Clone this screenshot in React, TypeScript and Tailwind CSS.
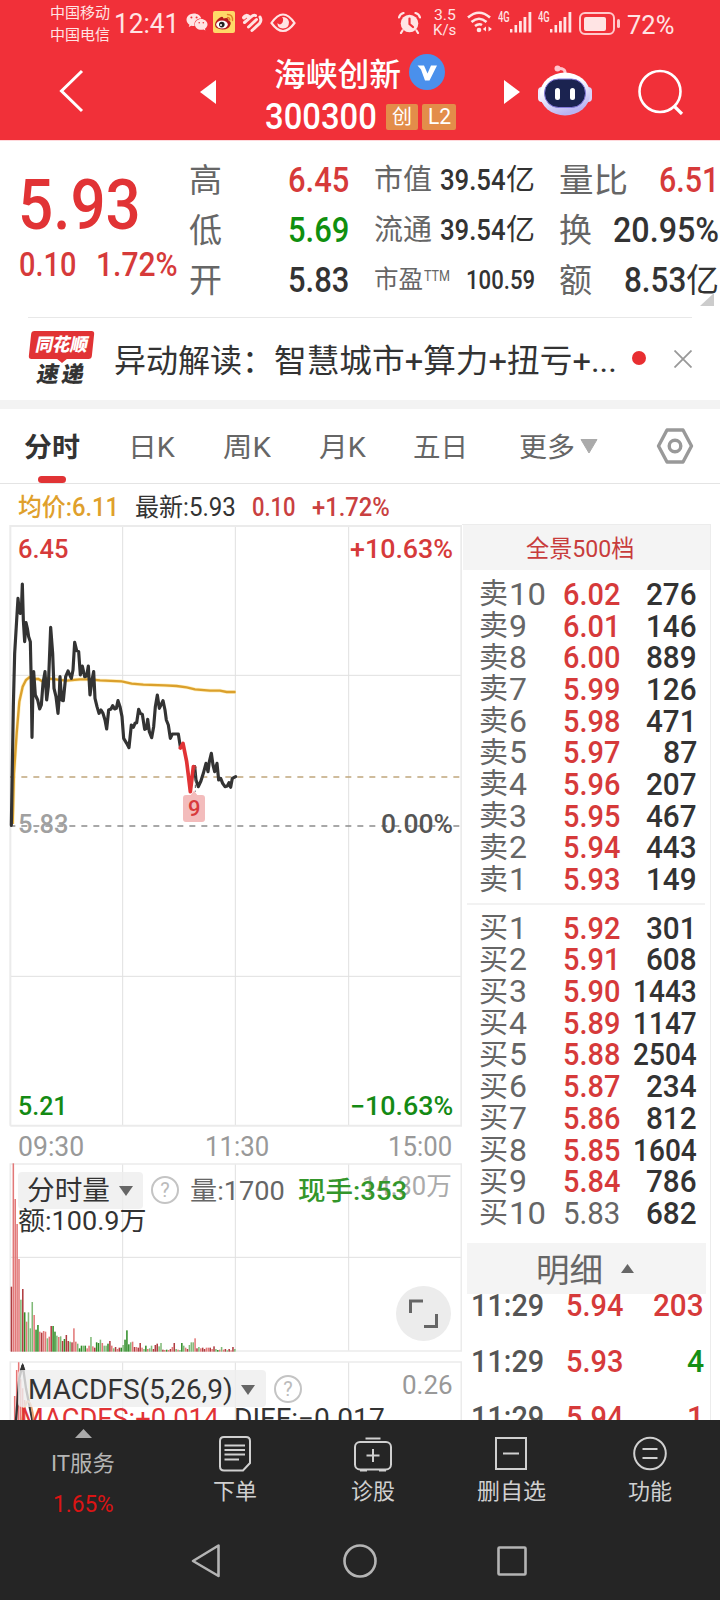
import React, { useLayoutEffect, useRef, useState } from 'react';
import { FaWeixin } from 'react-icons/fa';

const RED = '#d63a3a';

interface FitTextProps {
  className: string; // must carry the target width
  children: React.ReactNode;
}

// Condenses or stretches one line of text to the width of its box
const FitText: React.FC<FitTextProps> = ({ className, children }) => {
  const outer = useRef<HTMLSpanElement>(null);
  const inner = useRef<HTMLSpanElement>(null);
  const [scale, setScale] = useState(1);

  useLayoutEffect(() => {
    if (outer.current && inner.current) {
      setScale(outer.current.offsetWidth / inner.current.offsetWidth);
    }
  }, [children]);

  return (
    <span ref={outer} className={`flex shrink-0 leading-none ${className}`}>
      <span
        ref={inner}
        className="shrink-0 origin-left whitespace-pre"
        style={{ transform: `scaleX(${scale})` }}
      >
        {children}
      </span>
    </span>
  );
};

const SignalBars = () => (
  <div className="flex items-start">
    <FitText className="w-[12px] -mt-px text-[14px] font-medium">4G</FitText>
    <svg className="w-[22px] h-[22px]" viewBox="0 0 22 22" fill="currentColor">
      <rect x="0" y="18" width="2.4" height="3.500" />
      <rect x="4.5" y="14" width="2.6" height="7.500" />
      <rect x="9" y="10" width="2.8" height="11.500" />
      <rect x="13.500" y="6" width="2.800" height="15.500" />
      <rect x="18.500" y="1" width="2.800" height="20.500" />
    </svg>
  </div>
);

const StatusBar = () => (
  <div className="flex h-[46px] text-[#ffe4e4]">
    <div className="ml-[50px] w-[60px] pt-[2px] text-[15px] leading-[22px] whitespace-nowrap">
      <div>中国移动</div>
      <div>中国电信</div>
    </div>
    <div className="ml-[4px] pt-[11px]">
      <FitText className="w-[65px] text-[27px]">12:41</FitText>
    </div>
    <FaWeixin className="ml-[7px] mt-[11px] w-[22px] h-[22px]" />
    <svg className="ml-[5px] mt-[11px] w-[22px] h-[22px]" viewBox="0 0 22 22">
      <rect width="22" height="22" rx="2" fill="#ffd968" />
      <path d="M7 6.500 Q10 4.500 10.500 7.500 Q16 6 15.500 9.500 Q18.500 10.500 17.500 13.500 Q16 18.500 9.500 18.500 Q2 18 2 13.500 Q2.500 9.500 7 6.500 Z" fill="#b5191c" />
      <ellipse cx="9" cy="13.500" rx="5.800" ry="4" fill="#fff" />
      <circle cx="8.800" cy="13.600" r="2.800" fill="#222" />
      <circle cx="8" cy="14" r="1" fill="#fff" />
      <path d="M14.500 3.500 Q20 3.500 19.500 9.500 M14.500 6.500 Q17 6.500 16.800 9" fill="none" stroke="#e2812a" strokeWidth="1.400" strokeLinecap="round" />
    </svg>
    <svg className="ml-[6px] mt-[13px] w-[22px] h-[20px]" viewBox="0 0 22 20" fill="none" stroke="currentColor" strokeLinecap="round">
      <path d="M3 4.500 Q5 1.500 8 4" strokeWidth="4" />
      <path d="M3.500 9.500 L10 4 Q12.500 1.500 14.500 2.500" strokeWidth="3" />
      <path d="M7.500 14 L15.500 6.500" strokeWidth="3" />
      <path d="M11 17.500 L18.500 10.500 Q21 7.500 19 4" strokeWidth="3" />
    </svg>
    <svg className="ml-[7px] mt-[13px] w-[26px] h-[20px]" viewBox="0 0 26 20" fill="none" stroke="currentColor" strokeWidth="2.2">
      <path d="M1.500 10 Q13 -7 24.500 10 Q13 26 1.500 10 Z" />
      <path d="M12 4 Q18 4 19 9 Q19 15.500 13 15.500 Q7 15 7.500 10 Q10 13 12.500 9.500 Q14 6 12 4 Z" fill="currentColor" stroke="none" />
    </svg>
    <svg className="ml-[102px] mt-[12px] w-[23px] h-[22px]" viewBox="0 0 23 22" fill="currentColor">
      <circle cx="11.500" cy="11.500" r="8.800" />
      <path d="M1 5.500 Q2 2 5.500 1 M22 5.500 Q21 2 17.500 1 M4.500 18.500 L3 21 M18.500 18.500 L20 21" fill="none" stroke="currentColor" strokeWidth="2.200" strokeLinecap="round" />
      <path d="M11.500 6.500 V12 L15 15" fill="none" stroke="#f13038" strokeWidth="2.200" strokeLinecap="round" />
    </svg>
    <div className="ml-[12px] pt-[8px] text-[15px]">
      <FitText className="w-[22px] ml-px">3.5</FitText>
      <FitText className="w-[23px] text-[15px]">K/s</FitText>
    </div>
    <svg className="ml-[11px] mt-[11px] w-[26px] h-[22px]" viewBox="0 0 26 22" fill="none" stroke="currentColor" strokeWidth="2.600">
      <path d="M1 6.500 Q12 -3 23 6.500" />
      <path d="M4.500 11 Q12 4.500 19.500 11" />
      <path d="M8 15 Q12 12 15 14" />
      <circle cx="12" cy="19" r="2.300" fill="currentColor" stroke="none" />
      <path d="M19 15.500 V20.500 L15.800 18 Z M21.500 15.500 V20.500 L25 18 Z" fill="currentColor" stroke="none" />
    </svg>
    <div className="ml-[5px] mt-[11px]"><SignalBars /></div>
    <div className="ml-[6px] mt-[11px]"><SignalBars /></div>
    <div className="ml-[7px] mt-[12px] w-[36px] h-[23px] border-2 border-[#ffc9cb] rounded-[6px] p-[2.5px]">
      <div className="w-[22px] h-full bg-[#ffe4e4] rounded-[2px]" />
    </div>
    <div className="ml-[1.500px] mt-[19px] w-[3px] h-[9px] rounded-full bg-[#ffc9cb]" />
    <div className="ml-[7px] pt-[13px]">
      <FitText className="w-[47px] text-[25px]">72%</FitText>
    </div>
  </div>
);

const Robot = () => (
  <svg className="w-[54px] h-[52px]" viewBox="0 0 54 52">
    <defs>
      <linearGradient id="shell" x1="0" y1="0" x2="0.400" y2="1">
        <stop offset="0.400" stopColor="#fff" />
        <stop offset="1" stopColor="#b9b4f2" />
      </linearGradient>
    </defs>
    <path d="M20 3.500 Q28 3 27 9" fill="none" stroke="#ffc5cd" strokeWidth="3" />
    <circle cx="19.500" cy="3.500" r="3" fill="#ffc5cd" />
    <rect x="0" y="22" width="8" height="15" rx="4" fill="#efe9ff" />
    <rect x="46" y="22" width="8" height="15" rx="4" fill="#d8d2fa" />
    <ellipse cx="27" cy="29" rx="25" ry="21.500" fill="url(#shell)" />
    <rect x="6.500" y="14" width="41" height="28.500" rx="14" fill="#1b2350" stroke="#8579dc" strokeWidth="1" />
    <rect x="17" y="23" width="5" height="12" rx="2.500" fill="#fff" />
    <rect x="32" y="23" width="5" height="12" rx="2.500" fill="#fff" />
  </svg>
);

const Header = () => (
  <div className="flex h-[94px] text-white">
    <svg className="ml-[58px] mt-[23px] w-[26px] h-[44px]" viewBox="0 0 26 44" fill="none" stroke="currentColor" strokeWidth="3">
      <path d="M24 2 L3.500 22 L24 42" />
    </svg>
    <svg className="ml-[116px] mt-[34px] w-[16px] h-[24px]" viewBox="0 0 16 24" fill="currentColor">
      <path d="M16 0 V24 L0 12 Z" />
    </svg>
    <div className="ml-[49px] w-[192px]">
      <div className="flex items-center h-[52px] pl-[9px]">
        <FitText className="w-[127px] mt-[5px] text-[32px] font-medium">海峡创新</FitText>
        <svg className="ml-[8px] w-[36px] h-[36px]" viewBox="0 0 36 36">
          <circle cx="18" cy="18" r="18" fill="#4a90ec" />
          <path d="M8.500 11.500 H15 L18.500 19.500 L22 11.500 H28 L20.500 26.500 H16 L12 15.500 Z" fill="#fff" />
        </svg>
      </div>
      <div className="flex items-center pt-[1px]">
        <FitText className="w-[112px] text-[36px] font-medium">300300</FitText>
        <div className="ml-[9px] w-[32px] h-[26px] rounded-[2px] bg-[#e38d4a] flex items-center justify-center text-[20px] leading-none">创</div>
        <div className="ml-[4px] w-[34px] h-[26px] rounded-[2px] bg-[#e38d4a] flex items-center justify-center text-[22px] leading-none">
          <FitText className="w-[23px]">L2</FitText>
        </div>
      </div>
    </div>
    <svg className="ml-[47px] mt-[34px] w-[16px] h-[24px]" viewBox="0 0 16 24" fill="currentColor">
      <path d="M0 0 V24 L16 12 Z" />
    </svg>
    <div className="ml-[18px] mt-[19px]"><Robot /></div>
    <svg className="ml-[46px] mt-[23px] w-[46px] h-[46px]" viewBox="0 0 46 46" fill="none" stroke="currentColor" strokeWidth="2.600">
      <circle cx="22" cy="22.500" r="20.500" />
      <path d="M36 37 L44 45" strokeWidth="3.200" />
    </svg>
  </div>
);

const Quote = () => (
  <div className="relative flex h-[176px] text-[#333]">
    <div className="w-[189px] pl-[20px] text-[#e13335]">
      <FitText className="-ml-[2px] w-[123px] mt-[28px] text-[71px] font-medium">5.93</FitText>
      <div className="flex mt-[8px] text-[33px] text-[#d63a3a] font-medium">
        <FitText className="w-[57px] -ml-[1px]">0.10</FitText>
        <FitText className="ml-[20px] w-[82px]">1.72%</FitText>
      </div>
    </div>
    <div className="w-[160px] pt-[14px] text-[35px] font-medium">
      {[['高', '6.45', 'text-[#d63a3a]'], ['低', '5.69', 'text-[#0f8f0f]'], ['开', '5.83', '']].map(([label, value, color]) => (
        <div key={label} className="flex items-center justify-between h-[50px]">
          <span className="text-[33px] leading-none font-normal text-[#666]">{label}</span>
          <FitText className={`w-[61px] ${color}`}>{value}</FitText>
        </div>
      ))}
    </div>
    <div className="ml-[25px] w-[161px] pt-[14px]">
      {['市值', '流通'].map((label) => (
        <div key={label} className="flex items-center h-[50px]">
          <FitText className="w-[58px] text-[29px] text-[#666]">{label}</FitText>
          <FitText className="ml-[8px] w-[66px] text-[30px] font-medium">39.54</FitText>
          <span className="text-[29px] leading-none">亿</span>
        </div>
      ))}
      <div className="flex items-center h-[50px] text-[#666]">
        <span className="text-[24.500px] leading-none">市盈</span>
        <FitText className="ml-[1px] mt-[-9px] w-[26px] text-[14px]">TTM</FitText>
        <FitText className="ml-[16px] w-[69px] text-[26px] font-medium text-[#333]">100.59</FitText>
      </div>
    </div>
    <div className="ml-[24px] w-[160px] pt-[14px] text-[35px] font-medium">
      <div className="flex items-center justify-between h-[50px]">
        <FitText className="w-[69px] text-[33px] font-normal text-[#666]">量比</FitText>
        <FitText className="w-[60px] text-[#d63a3a]">6.51</FitText>
      </div>
      <div className="flex items-center justify-between h-[50px]">
        <span className="text-[33px] leading-none font-normal text-[#666]">换</span>
        <FitText className="w-[106px]">20.95%</FitText>
      </div>
      <div className="flex items-center h-[50px]">
        <span className="mr-auto text-[33px] leading-none font-normal text-[#666]">额</span>
        <FitText className="w-[62px]">8.53</FitText>
        <span className="text-[33px] leading-none font-normal">亿</span>
      </div>
    </div>
    <svg className="absolute right-[6px] top-[152px] w-[14px] h-[13px]" viewBox="0 0 14 13">
      <path d="M14 0 V13 H0 Z" fill="#ccc" />
    </svg>
  </div>
);

const NewsBar = () => (
  <div className="mx-[28px] flex h-[83px] border-t border-[#e8e8e8] text-[#333]">
    <div className="mt-[13px] w-[68px]">
      <div className="w-[63px] h-[28px] ml-[2px] -skew-x-6 rounded-[3px] bg-[#e13335] flex justify-center items-center text-white">
        <FitText className="w-[52px] text-[18px] font-black -skew-x-6">同花顺</FitText>
      </div>
      <svg className="ml-[28px] -mt-px w-[12px] h-[5px]" viewBox="0 0 12 5"><path d="M0 0 H12 L6 5 Z" fill="#e13335" /></svg>
      <div className="ml-[9px] flex gap-[3px] text-[22px] font-black leading-[24px] -skew-x-10">
        <span>速</span>
        <span>递</span>
      </div>
    </div>
    <div className="flex items-center ml-[18px] h-[85px] text-[32px]">
      <FitText className="w-[160px]">异动解读：</FitText>
      <FitText className="w-[343px]">智慧城市+算力+扭亏+...</FitText>
    </div>
    <div className="ml-[15px] mt-[33px] w-[14px] h-[14px] rounded-full bg-[#e82e31]" />
    <svg className="ml-[28px] mt-[32px] w-[18px] h-[18px]" viewBox="0 0 18 18" stroke="#999" strokeWidth="1.800">
      <path d="M0.500 0.500 L17.500 17.500 M17.500 0.500 L0.500 17.500" />
    </svg>
  </div>
);

const Tabs = () => (
  <div className="relative flex h-[75px] pt-[26px] border-b border-[#e4e4e4] text-[27px] text-[#666]">
    <FitText className="ml-[24px] w-[56px] font-bold text-[#333]">分时</FitText>
    <FitText className="ml-[48px] w-[47px]">日K</FitText>
    <FitText className="ml-[48px] w-[48px]">周K</FitText>
    <FitText className="ml-[48px] w-[47px]">月K</FitText>
    <FitText className="ml-[47px] w-[55px]">五日</FitText>
    <FitText className="ml-[51px] w-[56px]">更多</FitText>
    <svg className="ml-[5px] mt-[4px] w-[18px] h-[15px]" viewBox="0 0 18 15">
      <path d="M1 0.500 H17 L9 14 Z" fill="#aaa" stroke="#aaa" strokeLinejoin="round" />
    </svg>
    <svg className="ml-[58px] -mt-[7px] w-[38px] h-[36px]" viewBox="0 0 38 36" fill="none" stroke="#999" strokeWidth="3.400" strokeLinejoin="round">
      <path d="M11 2 H27 L35.500 18 L27 34 H11 L2.500 18 Z" />
      <circle cx="19" cy="18" r="5.800" />
    </svg>
    <div className="absolute left-[38px] top-[67px] w-[28px] h-[7px] rounded-full bg-[#e13335]" />
  </div>
);

const PRICE_LINE =
  '34,916 36,800 40,560 44,400 50,300 54,235 58,275 61,280 64,275 67,192 70,300 74,365 78,308 82,325 86,350 91,365 94,500 96,652 99,500 101,455 106,525 113,540 119,567 124,555 129,490 135,455 140,540 145,500 152,322 158,400 162,505 168,530 174,580 177,540 180,470 185,540 190,542 197,470 204,453 214,475 219,450 224,367 230,392 236,395 241,465 247,438 254,470 260,468 265,438 270,525 276,480 281,455 285,535 291,560 297,580 303,570 309,580 315,600 320,627 326,570 333,567 338,557 344,567 349,565 354,542 360,560 366,590 371,655 380,670 387,683 394,615 400,622 405,610 410,608 416,568 421,580 427,583 434,628 440,625 443,598 448,635 455,653 461,620 466,560 472,525 478,565 483,555 489,542 495,570 499,600 505,615 511,655 517,642 535,642 541,680';
const PRICE_DROP = '541,684 549,670 555,700 560,725 565,765 571,815 576,775 580,740 584,742';
const PRICE_TAIL =
  '584,740 588,780 595,800 602,785 610,760 618,730 624,755 628,725 634,700 639,735 644,755 651,730 656,780 662,775 668,790 675,800 682,798 687,788 692,802 697,775 707,770';
const AVG_LINE =
  '38,912 42,760 50,640 58,545 68,500 78,480 88,472 100,477 115,477 125,483 140,475 200,482 240,478 270,478 300,481 365,484 395,491 430,494 495,496 530,498 560,502 585,508 630,512 660,512 680,516 707,516';

const PriceChart = () => (
  <div className="relative h-[606px] text-[25px]">
    <svg className="w-[462px] h-[606px]" viewBox="0 12 1386 1818" fill="none">
      <g stroke="#e0e0e0" strokeWidth="3">
        <path d="M368 18 V1816 M706 18 V1816 M1046 18 V1816 M30 466 H1386 M30 1369 H1386" />
      </g>
      <path d="M31 1817 V18 H1386 M1384 18 V1817 H31" stroke="#ebebeb" strokeWidth="6" />
      <path d="M30 771 H1386" stroke="#c0a67c" strokeWidth="5" strokeDasharray="18 18" strokeDashoffset="2" />
      <path d="M30 918 H1386" stroke="#8c8c8c" strokeWidth="4.500" strokeDasharray="18 18" strokeDashoffset="2" />
      <polyline points={AVG_LINE} stroke="#fff0c0" strokeWidth="11" />
      <polyline points={AVG_LINE} stroke="#dba02c" strokeWidth="7" />
      <g strokeWidth="9.500" strokeLinejoin="round" strokeLinecap="round">
        <polyline points={PRICE_LINE} stroke="#333" />
        <polyline points={PRICE_TAIL} stroke="#333" />
        <polyline points={PRICE_DROP} stroke="#e13335" strokeWidth="11" />
      </g>
      <path d="M586 740 V815" stroke="#555" strokeWidth="3" strokeDasharray="10 8" />
      <path d="M558 825 H572 L582 812 L592 825 H606 Q615 825 615 834 V897 Q615 906 606 906 H558 Q549 906 549 897 V834 Q549 825 558 825 Z" fill="#f3bcbc" />
    </svg>
    <div className="absolute left-[18px] top-[13px] font-medium text-[#d63a3a]"><FitText className="w-[51px]">6.45</FitText></div>
    <div className="absolute right-[9px] top-[13px] font-medium text-[#d63a3a]"><FitText className="w-[103px]">+10.63%</FitText></div>
    <div className="absolute left-[18px] top-[288px] font-medium text-[#a0a0a0]"><FitText className="w-[51px]">5.83</FitText></div>
    <div className="absolute right-[9px] top-[288px] font-medium text-[#555]"><FitText className="w-[72px]">0.00%</FitText></div>
    <div className="absolute left-[188px] top-[274px] text-[22px] font-medium text-[#d8393b]"><FitText className="w-[13px]">9</FitText></div>
    <div className="absolute left-[18px] top-[570px] font-medium text-[#148a14]"><FitText className="w-[50px]">5.21</FitText></div>
    <div className="absolute right-[9px] top-[570px] font-medium text-[#148a14]"><FitText className="w-[103px]">−10.63%</FitText></div>
  </div>
);

// [height, tone] for each minute; tones: r/R light and dark red, g/G light and dark green
const VOLUME =
  '195R 565r 458r 383r 278r 156g 188R 118G 90r 118g 70g 149g 110r 66G 80G 60r 57R 62r 60r 40g 45r 77R 77G 60G 48g 44r 46g 32R 38G 50R 32R 30g 28R 70r 30r 24g 10G 18G 18g 18G 10r 18r 44g 16r 12R 28G 26G 36g 26r 18g 18g 24G 32R 18r 10g 14R 8r 12R 12G 20g 36G 64G 22G 28g 30r 14R 14r 12R 26R 12r 8g 18G 8r 10g 18g 8R 20R 24R 16g 26g 6R 5r 6G 5r 8R 14r 26R 8g 6r 5g 26G 18g 12r 8R 20g 28g 28g 40r 10R 14g 10r 12R 8R 12r 12r 12R 8r 16R 8g 5G 6r 14g 6r 8R 4g 8R 4r 14R 8g'
    .split(' ')
    .map((v) => ({ height: parseInt(v, 10), tone: v.slice(-1) }));

const TONES: Record<string, string> = { r: '#e27878', R: '#b03c40', g: '#80ba78', G: '#2f8d27' };

const HelpIcon = () => (
  <span className="flex items-center justify-center w-[28px] h-[28px] rounded-full border-2 border-[#c4c4c4] text-[20px] leading-none text-[#bbb]">?</span>
);

const VolumeChart = () => (
  <div className="relative h-[192px]">
    <svg className="w-[462px] h-[192px]" viewBox="0 186 1386 576" fill="none">
      <path d="M368 192 V753 M706 192 V753 M1046 192 V753 M30 472 H1386" stroke="#e0e0e0" strokeWidth="3" />
      <path d="M31 753 V192 H1386 M1384 192 V753 H31" stroke="#ebebeb" strokeWidth="5" />
      {VOLUME.map((bar, i) => (
        <rect key={i} x={32 + i * 5.68} y={755 - bar.height} width="4.600" height={bar.height} fill={TONES[bar.tone]} />
      ))}
    </svg>
    <div className="absolute left-[18px] top-[10px] flex items-center h-[36px]">
      <div className="flex items-center w-[125px] h-[37px] pl-[9px] pt-[2px] rounded-[4px] bg-[#eee]/80 text-[27px] text-[#333]">
        <FitText className="w-[83px]">分时量</FitText>
        <svg className="ml-[9px] w-[14px] h-[10px]" viewBox="0 0 14 10"><path d="M0 0 H14 L7 10 Z" fill="#666" /></svg>
      </div>
      <div className="ml-[8px]"><HelpIcon /></div>
      <FitText className="ml-[11px] mt-[1px] w-[95px] text-[26px] text-[#666]">量:1700</FitText>
    </div>
    <div className="absolute right-[10px] top-[12px] text-[25px] text-[#aaa]"><FitText className="w-[90px]">14.30万</FitText></div>
    <div className="absolute left-[298px] top-[16px] text-[26px] font-medium text-[#33962a]"><FitText className="w-[109px]">现手:353</FitText></div>
    <div className="absolute left-[18px] top-[46px] text-[26px] text-[#333]"><FitText className="w-[129px]">额:100.9万</FitText></div>
    <svg className="absolute left-[396px] top-[124px] w-[55px] h-[55px]" viewBox="0 0 55 55">
      <circle cx="27.500" cy="27.500" r="27.500" fill="#ececec" />
      <path d="M14.500 27 V15 H27 M28 40.500 H40.500 V28" fill="none" stroke="#666" strokeWidth="3" />
    </svg>
  </div>
);

const MacdChart = () => (
  <div className="relative h-[66px] overflow-hidden">
    <svg className="w-[462px] h-[66px]" viewBox="0 762 1386 198" fill="none">
      <path d="M368 786 V960 M706 786 V960 M1046 786 V960" stroke="#e0e0e0" strokeWidth="3" />
      <path d="M31 960 V786 H1386 M1384 786 V960" stroke="#ebebeb" strokeWidth="5" />
      <path d="M44 960 V888 M50 960 V810 M56 960 V787 M62 960 V838 M68 960 V865 M74 960 V900" stroke="#e87575" strokeWidth="4.500" />
      <path d="M48 960 L58 835 L68 795 L78 865 L97 960" stroke="#333" strokeWidth="7" />
      <path d="M68 788 L60 810 H76 Z" fill="#333" />
      <path d="M66 960 Q78 895 86 905 Q94 905 101 960" stroke="#e8a06c" strokeWidth="6" />
    </svg>
    <div className="absolute left-[18px] top-[16px] flex items-center h-[37px]">
      <div className="flex items-center w-[248px] h-[37px] pl-[10px] pt-[2px] rounded-[4px] bg-[#eee]/80 text-[28px] text-[#333]">
        <FitText className="w-[205px]">MACDFS(5,26,9)</FitText>
        <svg className="ml-[8px] w-[14px] h-[10px]" viewBox="0 0 14 10"><path d="M0 0 H14 L7 10 Z" fill="#666" /></svg>
      </div>
      <div className="ml-[8px]"><HelpIcon /></div>
    </div>
    <div className="absolute right-[9px] top-[18px] text-[26px] text-[#999]"><FitText className="w-[51px]">0.26</FitText></div>
    <div className="absolute left-[20px] top-[52px] flex text-[27px]">
      <FitText className="w-[199px] text-[#e13335]">MACDFS:+0.014</FitText>
      <FitText className="ml-[15px] w-[151px] text-[#333]">DIFF:−0.017</FitText>
    </div>
  </div>
);

const SELLS: [string, string][] = [
  ['6.02', '276'], ['6.01', '146'], ['6.00', '889'], ['5.99', '126'], ['5.98', '471'],
  ['5.97', '87'], ['5.96', '207'], ['5.95', '467'], ['5.94', '443'], ['5.93', '149'],
];
const BUYS: [string, string][] = [
  ['5.92', '301'], ['5.91', '608'], ['5.90', '1443'], ['5.89', '1147'], ['5.88', '2504'],
  ['5.87', '234'], ['5.86', '812'], ['5.85', '1604'], ['5.84', '786'], ['5.83', '682'],
];
const QTY_WIDTH: Record<number, string> = { 1: 'w-[17px]', 2: 'w-[34px]', 3: 'w-[51px]', 4: 'w-[64px]' };

interface BookRowProps {
  side: string;
  level: number;
  price: string;
  qty: string;
}

const BookRow: React.FC<BookRowProps> = ({ side, level, price, qty }) => (
  <div className="flex items-center h-[31.700px] pl-[17px] pr-[13px] text-[32px]">
    <span className="text-[29px] leading-none mt-[2px] text-[#666]">{side}</span>
    <FitText className={`ml-[1px] text-[#666] ${level > 9 ? 'w-[37px]' : 'w-[18px]'}`}>{level}</FitText>
    <FitText className={`w-[57px] ${level > 9 ? 'ml-[17px]' : 'ml-[36px]'} ${price === '5.83' ? 'text-[#666]' : 'font-medium text-[#d63a3a]'}`}>{price}</FitText>
    <div className="ml-auto font-medium text-[#333]">
      <FitText className={QTY_WIDTH[qty.length]}>{qty}</FitText>
    </div>
  </div>
);

const OrderBook = () => (
  <div className="w-[249px] border-r border-t border-[#ececec] overflow-hidden">
    <div className="ml-px flex justify-center items-center h-[45px] pr-[13px] pt-[2px] bg-[#f4f4f4] text-[24px] text-[#c83c3c]">
      <FitText className="w-[108px]">全景500档</FitText>
    </div>
    <div className="pt-[8px]">
      {SELLS.map(([price, qty], i) => (
        <BookRow key={price} side="卖" level={10 - i} price={price} qty={qty} />
      ))}
    </div>
    <div className="mx-[5px] mt-[8px] mb-[7px] h-[2px] bg-[#f2f2f2]" />
    {BUYS.map(([price, qty], i) => (
      <BookRow key={price} side="买" level={i + 1} price={price} qty={qty} />
    ))}
    <div className="ml-[5px] mr-[4px] mt-[14px] flex items-center h-[51px] pl-[69px] bg-[#f4f4f4] text-[33px] text-[#666]">
      <FitText className="w-[67px] mt-[4px]">明细</FitText>
      <svg className="ml-[18px] w-[13px] h-[9px]" viewBox="0 0 13 9"><path d="M0 9 H13 L6.500 0 Z" fill="#666" /></svg>
    </div>
    <div className="-mt-[17px] relative -z-10">
      {[['5.94', '203', RED], ['5.93', '4', '#148f14'], ['5.94', '1', RED]].map(([price, qty, color], i) => (
        <div key={i} className="flex items-center h-[56px] pl-[9px] pr-[6px] text-[32px]">
          <FitText className="w-[73px] font-medium text-[#555]">11:29</FitText>
          <FitText className="ml-[22px] w-[57px] font-medium text-[#d63a3a]">{price}</FitText>
          <div className="ml-auto font-medium" style={{ color }}>
            <FitText className={QTY_WIDTH[qty.length]}>{qty}</FitText>
          </div>
        </div>
      ))}
    </div>
  </div>
);

const navIcon = 'h-[36px]';

const BottomNav = () => (
  <div className="h-[180px] bg-[#252525] text-[#d0d0d0]">
    <div className="flex h-[110px] text-[22px]">
      <div className="ml-[41px] w-[84px] flex flex-col items-center pt-[9px]">
        <svg className="w-[17px] h-[9px]" viewBox="0 0 17 9"><path d="M0 9 H17 L8.500 0 Z" fill="#aaa" /></svg>
        <FitText className="mt-[15px] w-[64px] text-[#b5b5b5]">IT服务</FitText>
        <FitText className="mt-[18px] w-[61px] text-[23px] text-[#db1414]">1.65%</FitText>
      </div>
      <div className="ml-[68px] w-[84px] flex flex-col items-center pt-[16px]">
        <svg className={`w-[32px] ${navIcon}`} viewBox="0 0 32 36" fill="none" stroke="currentColor" strokeWidth="2">
          <path d="M5 1 H27 Q31 1 31 5 V27 L24 34.500 H5 Q1 34.500 1 30.500 V5 Q1 1 5 1 Z" />
          <path d="M5.500 9.500 H26 M5.500 14 H26 M5.500 18.500 H26 M5.500 23.500 H20" />
        </svg>
        <span className="mt-[9px] leading-none">下单</span>
      </div>
      <div className="ml-[54px] w-[84px] flex flex-col items-center pt-[16px]">
        <svg className={`w-[38px] ${navIcon}`} viewBox="0 0 38 36" fill="none" stroke="currentColor" strokeWidth="2">
          <rect x="1" y="6" width="36" height="27.500" rx="5" />
          <path d="M11.500 2.500 H26.500 M6 34.500 H13 M25 34.500 H32 M19 13 V26 M12.500 19.500 H25.500" />
        </svg>
        <span className="mt-[9px] leading-none">诊股</span>
      </div>
      <div className="ml-[54px] w-[84px] flex flex-col items-center pt-[16px]">
        <svg className={`w-[32px] ${navIcon}`} viewBox="0 0 32 36" fill="none" stroke="currentColor" strokeWidth="2">
          <rect x="1" y="2" width="30" height="31" />
          <path d="M8 17.500 H24" />
        </svg>
        <FitText className="mt-[9px] w-[69px]">删自选</FitText>
      </div>
      <div className="ml-[55px] w-[84px] flex flex-col items-center pt-[16px]">
        <svg className={`w-[34px] ${navIcon}`} viewBox="0 0 34 36" fill="none" stroke="currentColor" strokeWidth="2">
          <circle cx="17" cy="17.500" r="15.800" />
          <path d="M9.500 13 H24.500 M9.500 22 H24.500" />
        </svg>
        <span className="mt-[9px] leading-none">功能</span>
      </div>
    </div>
    {/* system navigation */}
    <svg className="w-[720px] h-[60px]" viewBox="0 0 720 60" fill="none" stroke="#b4b4b4" strokeWidth="2.600" strokeLinejoin="round">
      <path d="M218.500 15.500 V46 L193 31 Z" />
      <circle cx="360" cy="31" r="15.500" />
      <rect x="498.500" y="17.500" width="27" height="27" rx="1" />
    </svg>
  </div>
);

const App: React.FC = () => {
  return (
    <div className="isolate w-[720px] h-[1600px] overflow-hidden bg-white font-['Roboto','Noto_Sans_CJK_SC',sans-serif]">
      <div className="bg-[#f13039] h-[140px]">
        <StatusBar />
        <Header />
      </div>
      <div className="h-px bg-[#ffd9dc]" />
      <Quote />
      <NewsBar />
      <div className="h-[9px] bg-[#f3f3f3]" />
      <Tabs />
      <div className="flex items-center h-[40px] pl-[18px] pt-[6px] text-[25px] text-[#333]">
        <FitText className="w-[101px] font-medium text-[#dfa02c]">均价:6.11</FitText>
        <FitText className="ml-[16px] w-[101px]">最新:5.93</FitText>
        <FitText className="ml-[16px] w-[44px] font-medium text-[#c94040]">0.10</FitText>
        <FitText className="ml-[16px] w-[78px] font-medium text-[#c94040]">+1.72%</FitText>
      </div>
      <div className="flex h-[896px]">
        <div className="w-[462px]">
          <PriceChart />
          <div className="flex items-center h-[32px] pl-[18px] pt-[2px] text-[27px] text-[#999]">
            <FitText className="w-[66px]">09:30</FitText>
            <FitText className="ml-[121px] w-[64px]">11:30</FitText>
            <FitText className="ml-[119px] w-[64px]">15:00</FitText>
          </div>
          <VolumeChart />
          <MacdChart />
        </div>
        <OrderBook />
      </div>
      <BottomNav />
    </div>
  );
};

export default App;
